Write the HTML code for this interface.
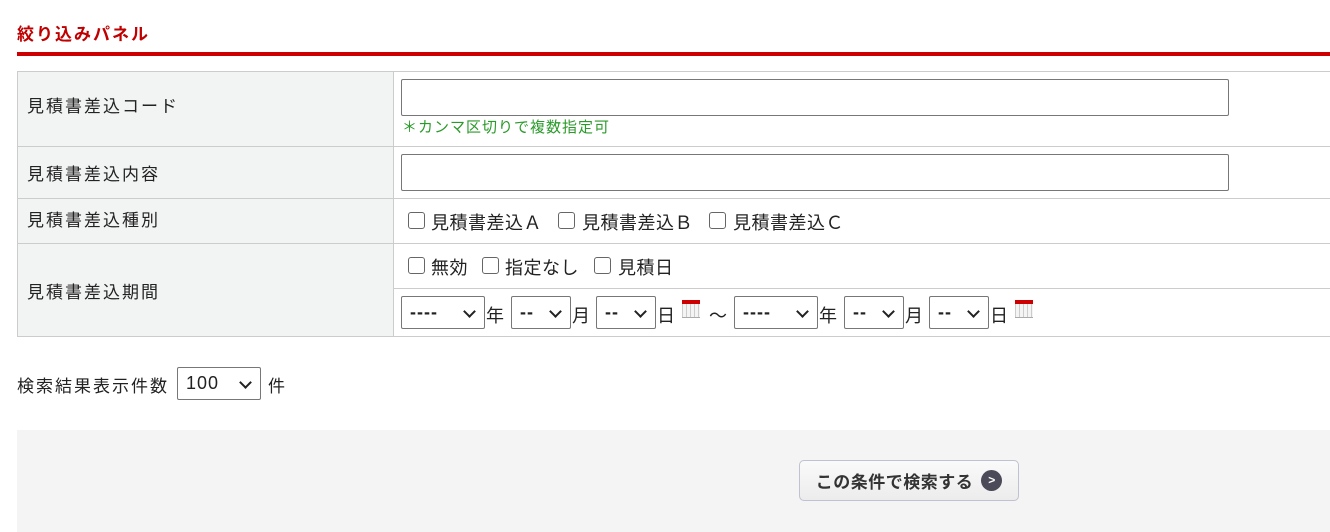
<!DOCTYPE html>
<html><head><meta charset="utf-8"><style>
*{box-sizing:border-box;margin:0;padding:0}
body{width:1330px;height:532px;background:#fff;font-family:"Liberation Sans","Noto Sans CJK JP",sans-serif;font-size:17px;letter-spacing:2px;color:#222;position:relative;overflow:hidden}
.a{position:absolute}
.title{left:17px;top:20px;color:#c00000;font-weight:bold;font-size:17px;letter-spacing:2px}
.bar{left:17px;top:52px;width:1313px;height:4px;background:#cc0000}
.lab{background:#f2f3f3;border:1px solid #ccc;left:17px;width:377px;padding-left:9px;display:flex;align-items:center}
.val{border:1px solid #ccc;border-left:none;left:393px;width:940px}
.inp{position:absolute;left:401px;width:828px;height:37px;border:1px solid #777;border-radius:2px;background:#fff}
.cb{position:absolute;width:17px;height:17px;border:1px solid #666;border-radius:3px;background:#fff}
.t{position:absolute;font-size:18px;letter-spacing:0.5px;white-space:nowrap}
.sel{position:absolute;top:296px;height:33px;border:1px solid #777;border-radius:2px;background:#fff;padding-left:8px;line-height:31px;font-size:18px;font-weight:bold;letter-spacing:1px}
.sel:after{content:"";position:absolute;right:10px;top:10px;width:7px;height:7px;border-right:2px solid #222;border-bottom:2px solid #222;transform:rotate(45deg)}
.cal{position:absolute;top:300px;width:18px;height:18px;background:repeating-linear-gradient(90deg,#ccc 0 1px,#f4f4f4 1px 4px);border-top:4px solid #c00;border-bottom:1px solid #aaa}
.u{position:absolute;top:302px;font-size:18px;letter-spacing:0}
</style></head><body>
<div class="a title">絞り込みパネル</div>
<div class="a bar"></div>

<div class="a lab" style="top:71px;height:76px;padding-bottom:10px">見積書差込コード</div>
<div class="a val" style="top:71px;height:76px"></div>
<div class="inp" style="top:79px"></div>
<div class="a" style="left:402px;top:116px;font-size:15px;letter-spacing:1px;color:#2a9a2a">＊カンマ区切りで複数指定可</div>

<div class="a lab" style="top:146px;height:53px">見積書差込内容</div>
<div class="a val" style="top:146px;height:53px"></div>
<div class="inp" style="top:154px"></div>

<div class="a lab" style="top:198px;height:46px;align-items:flex-start;padding-top:7px">見積書差込種別</div>
<div class="a val" style="top:198px;height:46px"></div>
<div class="cb" style="left:408px;top:212px"></div><div class="t" style="left:431px;top:209px">見積書差込Ａ</div>
<div class="cb" style="left:558px;top:212px"></div><div class="t" style="left:582px;top:209px">見積書差込Ｂ</div>
<div class="cb" style="left:709px;top:212px"></div><div class="t" style="left:733px;top:209px">見積書差込Ｃ</div>

<div class="a lab" style="top:243px;height:94px">見積書差込期間</div>
<div class="a val" style="top:243px;height:46px"></div>
<div class="a val" style="top:288px;height:49px"></div>
<div class="cb" style="left:408px;top:257px"></div><div class="t" style="left:431px;top:254px">無効</div>
<div class="cb" style="left:482px;top:257px"></div><div class="t" style="left:505px;top:254px">指定なし</div>
<div class="cb" style="left:594px;top:257px"></div><div class="t" style="left:618px;top:254px">見積日</div>

<div class="sel" style="left:401px;width:84px">----</div><div class="u" style="left:486px">年</div>
<div class="sel" style="left:511px;width:60px">--</div><div class="u" style="left:572px">月</div>
<div class="sel" style="left:596px;width:60px">--</div><div class="u" style="left:657px">日</div>
<div class="cal" style="left:682px"></div><div class="u" style="left:709px">～</div>
<div class="sel" style="left:734px;width:84px">----</div><div class="u" style="left:819px">年</div>
<div class="sel" style="left:844px;width:60px">--</div><div class="u" style="left:905px">月</div>
<div class="sel" style="left:929px;width:60px">--</div><div class="u" style="left:990px">日</div>
<div class="cal" style="left:1015px"></div>

<div class="a" style="left:17px;top:372px;white-space:nowrap">検索結果表示件数</div>
<div class="sel" style="left:177px;top:367px;width:84px;font-weight:normal">100</div>
<div class="a" style="left:268px;top:372px">件</div>

<div class="a" style="left:17px;top:430px;width:1313px;height:102px;background:#f4f4f4"></div>
<div class="a" style="left:799px;top:460px;width:220px;height:41px;border:1px solid #bfc2d0;border-radius:5px;background:linear-gradient(#fafafa,#ececec);display:flex;align-items:center;justify-content:center;font-weight:bold;font-size:17px;letter-spacing:0.5px;color:#333">この条件で検索する<span style="display:inline-block;width:21px;height:21px;border-radius:50%;background:#4a4a58;color:#fff;font-size:12px;line-height:21px;text-align:center;margin-left:8px;letter-spacing:0">&gt;</span></div>
</body></html>
